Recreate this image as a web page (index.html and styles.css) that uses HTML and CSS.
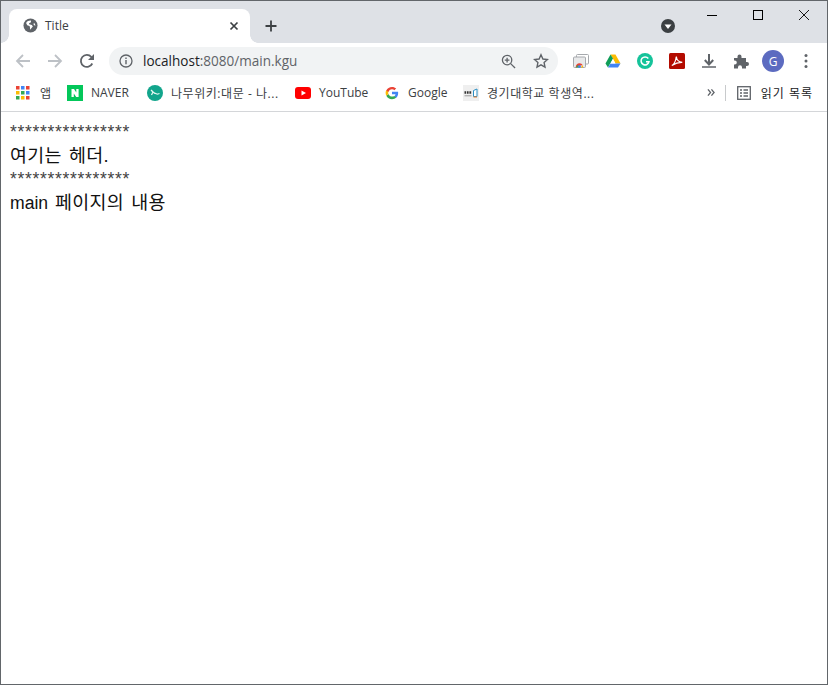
FILE: index.html
```html
<!DOCTYPE html>
<html lang="ko">
<head>
<meta charset="utf-8">
<title>Title</title>
<link rel="stylesheet" href="styles.css">
</head>
<body>
<div class="window">
  <header class="titlebar">
    <div class="tab">
      <svg class="globe" viewBox="0 0 16 16"><circle cx="8" cy="8" r="7.500" fill="#5f6368"/><path d="M8.500 2.800C6.500 2.600 4.500 3.500 3.300 5.300l1.200 2.500 2.500.7.500 1.800v2.200l1.200-1.200 1.800-2.300-1-1.500-3-.8V5.500l2-1zM12 5.200l-1 1.300 1 1.300 1.200.4c0-1-.5-2.100-1.200-3z" fill="#fff"/></svg>
      <span class="tab-title">Title</span>
      <svg class="tab-close" viewBox="0 0 10 10"><path d="M1.500 1.500l7 7M8.500 1.500l-7 7" stroke="#3c4043" stroke-width="1.700" fill="none"/></svg>
    </div>
    <svg class="newtab" viewBox="0 0 12 12"><path d="M6 .5v11M.5 6h11" stroke="#3c4043" stroke-width="1.800" fill="none"/></svg>
    <div class="title-spacer"></div>
    <svg class="search-tabs" viewBox="0 0 14 14"><circle cx="7" cy="7" r="7" fill="#3c4043"/><path d="M3.500 5.500h7L7 10z" fill="#fff"/></svg>
    <div class="winctl">
      <svg viewBox="0 0 10 10"><path d="M0 5.500h10" stroke="#000" fill="none"/></svg>
      <svg viewBox="0 0 10 10"><rect x=".5" y=".5" width="9" height="9" stroke="#000" fill="none"/></svg>
      <svg viewBox="0 0 10 10"><path d="M0 0l10 10M10 0L0 10" stroke="#000" stroke-width=".9" fill="none"/></svg>
    </div>
  </header>

  <div class="toolbar">
    <svg class="nav" viewBox="0 0 16 16"><path d="M15 8H2M8 2L2 8l6 6" stroke="#bdc1c6" stroke-width="1.800" fill="none"/></svg>
    <svg class="nav" viewBox="0 0 16 16"><path d="M1 8h13M8 2l6 6-6 6" stroke="#bdc1c6" stroke-width="1.800" fill="none"/></svg>
    <svg class="nav" viewBox="0 0 16 16"><path d="M13.300 10.500A6 6 0 1 1 12.300 3.800L14 5.500" stroke="#5f6368" stroke-width="1.800" fill="none"/><path d="M15 1v6H9z" fill="#5f6368"/></svg>
    <div class="omnibox">
      <svg class="info" viewBox="0 0 14 14"><circle cx="7" cy="7" r="6" stroke="#5f6368" stroke-width="1.300" fill="none"/><path d="M7 6v4.300M7 3.500v1.400" stroke="#5f6368" stroke-width="1.400" fill="none"/></svg>
      <span class="url">localhost<span class="url-rest">:8080/main.kgu</span></span>
      <svg class="zoom-ic" viewBox="0 0 16 16"><circle cx="6.500" cy="6.500" r="5" stroke="#5f6368" stroke-width="1.400" fill="none"/><path d="M10.300 10.300L15 15M6.500 4v5M4 6.500h5" stroke="#5f6368" stroke-width="1.400" fill="none"/></svg>
      <svg class="star" viewBox="0 0 16 16"><path d="M8 1.800l1.900 4.200 4.600.5-3.400 3.100.9 4.600L8 11.900l-4 2.300.9-4.600L1.500 6.500l4.600-.5z" stroke="#5f6368" stroke-width="1.400" fill="none"/></svg>
    </div>
    <div class="extensions">
      <svg class="ext" viewBox="0 0 16 16"><rect x="3.500" y="1.500" width="12" height="9.500" rx="1" fill="#fff" stroke="#a6a9ad"/><rect x=".5" y="4" width="12" height="10.500" rx="1" fill="#e8e9ea" stroke="#a6a9ad"/><path d="M2.800 14.500a3.700 3.700 0 0 1 3.700-4.200c1.500 0 2.600.7 3.300 2l-2 .3z" fill="#ea4335"/><path d="M9.800 12.300c.3.700.4 1.400.2 2.200H7.500z" fill="#fbbc04"/><path d="M2.800 14.500h4l-2-2.500z" fill="#34a853"/><circle cx="6.500" cy="13.600" r="1.400" fill="#4285f4"/></svg>
      <svg class="ext" viewBox="0 0 16 16"><path d="M5.500 1.500h5l5 9h-5z" fill="#fbbc04"/><path d="M5.500 1.500L.5 10.500 3 14.500l5-9z" fill="#0f9d58"/><path d="M3 14.500h10l2.500-4H5.500z" fill="#4285f4"/><path d="M8 6l2.400 4.500H5.600z" fill="#fff"/></svg>
      <svg class="ext" viewBox="0 0 16 16"><circle cx="8" cy="8" r="8" fill="#15c39a"/><path d="M11.300 5.500A4 4 0 1 0 12 8.700H9" stroke="#fff" stroke-width="1.500" fill="none"/></svg>
      <svg class="ext" viewBox="0 0 16 16"><rect width="16" height="16" rx="1.500" fill="#b30b00"/><path d="M2.800 12.500c2-1 4-5 4.500-9 .3 3 2.500 5.500 6 5.800-3.500-.2-7 1-10.500 3.200z" stroke="#fff" stroke-width="1.200" fill="none"/></svg>
      <svg class="ext" viewBox="0 0 16 16"><path d="M8 1v10M3.800 7L8 11.500 12.200 7" stroke="#5f6368" stroke-width="2" fill="none"/><path d="M1 14h14" stroke="#5f6368" stroke-width="1.500"/></svg>
      <svg class="ext" viewBox="0 0 16 16"><path d="M1 5h3.500V3.500a2 2 0 0 1 4 0V5H13v4h1a2 2 0 0 1 0 4h-1v2.500H9v-1.200a2 2 0 0 0-4 0v1.200H1v-4h.8a2 2 0 0 0 0-4H1z" fill="#5f6368"/></svg>
      <div class="avatar">G</div>
      <svg class="menu" viewBox="0 0 4 16"><circle cx="2" cy="2.500" r="1.500" fill="#5f6368"/><circle cx="2" cy="8" r="1.500" fill="#5f6368"/><circle cx="2" cy="13.500" r="1.500" fill="#5f6368"/></svg>
    </div>
  </div>

  <nav class="bookmarks">
    <a class="bm bm-apps">
      <svg class="bi" viewBox="0 0 14 14"><g><rect width="3.500" height="3.500" fill="#ea4335"/><rect x="5" width="3.500" height="3.500" fill="#4285f4"/><rect x="10" width="3.500" height="3.500" fill="#ea4335"/><rect y="5" width="3.500" height="3.500" fill="#fbbc04"/><rect x="5" y="5" width="3.500" height="3.500" fill="#34a853"/><rect x="10" y="5" width="3.500" height="3.500" fill="#4285f4"/><rect y="10" width="3.500" height="3.500" fill="#34a853"/><rect x="5" y="10" width="3.500" height="3.500" fill="#fbbc04"/><rect x="10" y="10" width="3.500" height="3.500" fill="#ea4335"/></g></svg>
      <span class="ko">앱</span>
    </a>
    <a class="bm bm-naver">
      <svg class="bi" viewBox="0 0 16 16"><rect width="16" height="16" fill="#03c75a"/><path d="M4.500 4h2.500l2.300 3.500V4h2.300v8H9.200L6.800 8.500V12H4.500z" fill="#fff"/></svg>
      <span>NAVER</span>
    </a>
    <a class="bm bm-namu">
      <svg class="bi" viewBox="0 0 16 16"><circle cx="8" cy="8" r="8" fill="#12a58c"/><path d="M4 5l2 2-1.500 3M6 7l2 1.500M8 8.500c1-.5 1.500 1 3 .5l1.500-.5" stroke="#e6f7f2" stroke-width="1.300" fill="none"/></svg>
      <span class="ko">나무위키:대문 - 나...</span>
    </a>
    <a class="bm bm-yt">
      <svg class="bi" viewBox="0 0 16 16"><rect y="2" width="16" height="12" rx="3" fill="#f00"/><path d="M6.500 5.500L11 8l-4.500 2.500z" fill="#fff"/></svg>
      <span>YouTube</span>
    </a>
    <a class="bm bm-google">
      <svg class="bi bi-g" viewBox="0 0 16 16"><path d="M15 8.200c0-.6 0-1-.1-1.500H8v2.800h4c-.2 1-.7 1.700-1.500 2.200l2.300 1.800C14.200 12.200 15 10.400 15 8.200z" fill="#4285f4"/><path d="M8 15c2 0 3.600-.6 4.800-1.800l-2.300-1.800c-.6.400-1.500.7-2.500.7-1.900 0-3.500-1.300-4.100-3L1.500 11C2.700 13.400 5.100 15 8 15z" fill="#34a853"/><path d="M3.900 9.100a4.300 4.300 0 0 1 0-2.700L1.500 4.600a7 7 0 0 0 0 6.400z" fill="#fbbc04"/><path d="M8 3.700c1.100 0 2 .4 2.800 1.100l2-2.100C11.600 1.700 10 1 8 1 5.100 1 2.700 2.600 1.500 5l2.400 1.800c.6-1.800 2.200-3.100 4.100-3.100z" fill="#ea4335"/></svg>
      <span>Google</span>
    </a>
    <a class="bm bm-kgu">
      <svg class="bi" viewBox="0 0 16 16"><rect width="16" height="16" fill="#efefef"/><path d="M1.500 7.500h1.500M3.800 7.500h1.800M6.400 7.500h1.800" stroke="#333" stroke-width="2.400"/><path d="M1.500 10.800h7" stroke="#9a9a9a"/><path d="M10.500 11.500V5.500l3.500-1.500v7.500z" fill="#fff" stroke="#2a8fc4"/><path d="M10.500 12h3.500" stroke="#e57b2f"/></svg>
      <span class="ko">경기대학교 학생역...</span>
    </a>
    <div class="bm-spacer"></div>
    <svg class="more" viewBox="0 0 9 8"><path d="M1 .5L4 4 1 7.500M5 .5L8 4 5 7.500" stroke="#5f6368" stroke-width="1.500" fill="none"/></svg>
    <div class="bm-sep"></div>
    <a class="bm bm-read">
      <svg class="bi-read" viewBox="0 0 14 14"><rect x=".7" y=".7" width="12.600" height="12.600" stroke="#5f6368" stroke-width="1.300" fill="none"/><path d="M3 4h2M6.500 4H11M3 7h2M6.500 7H11M3 10h2M6.500 10H11" stroke="#5f6368" stroke-width="1.300"/></svg>
      <span class="ko ko-read">읽기 목록</span>
    </a>
  </nav>

  <main class="page">
    <div class="stars">****************</div>
    <div class="ko-line">여기는 헤더.</div>
    <div class="stars">****************</div>
    <div>main <span class="ko-line">페이지의 내용</span></div>
  </main>
</div>
</body>
</html>
```

FILE: styles.css
```css
* { box-sizing: border-box; }
html, body { margin: 0; padding: 0; background: #fff; }
.window {
  width: 828px;
  height: 685px;
  border: 1px solid #62666a;
  display: flex;
  flex-direction: column;
  overflow: hidden;
  font-family: "Open Sans", "Noto Sans CJK KR", sans-serif;
}
.titlebar {
  height: 42px;
  flex: none;
  background: #dee1e6;
  display: flex;
  align-items: flex-start;
  padding-left: 8px;
}
.tab {
  position: relative;
  width: 241px;
  height: 34px;
  margin-top: 8px;
  background: #fff;
  border-radius: 8px 8px 0 0;
  display: flex;
  align-items: center;
  padding: 0 11px 1px 14px;
}
.tab::before,
.tab::after {
  content: "";
  position: absolute;
  bottom: 0;
  width: 8px;
  height: 8px;
}
.tab::before {
  left: -8px;
  background: radial-gradient(circle at 0 0, #dee1e6 7.5px, #fff 8px);
}
.tab::after {
  right: -8px;
  background: radial-gradient(circle at 100% 0, #dee1e6 7.5px, #fff 8px);
}
.globe { width: 15px; height: 15px; flex: none; }
.tab-title { font-size: 12px; color: #3c4043; margin-left: 7px; flex: 1; }
.tab-close { width: 10px; height: 10px; flex: none; }
.newtab { width: 12px; height: 12px; margin: 19px 0 0 15px; flex: none; }
.title-spacer { flex: 1; }
.search-tabs { width: 14px; height: 14px; margin: 18px 32px 0 0; flex: none; }
.winctl { display: flex; gap: 36px; padding: 9px 18px 0 0; }
.winctl svg { width: 10px; height: 10px; }
.toolbar {
  height: 34px;
  flex: none;
  display: flex;
  align-items: center;
  padding: 2px 0 0 14px;
  background: #fff;
}
.nav { width: 16px; height: 16px; flex: none; margin-right: 16px; }
.omnibox {
  width: 449px;
  height: 28px;
  margin-left: -2px;
  background: #f1f3f4;
  border-radius: 14px;
  display: flex;
  align-items: center;
  padding: 0 9px 0 10px;
  flex: none;
}
.info { width: 14px; height: 14px; flex: none; }
.url { font-size: 13.55px; color: #202124; margin-left: 10px; flex: 1; }
.url-rest { color: #5f6368; }
.zoom-ic { width: 15px; height: 15px; margin-right: 17px; flex: none; }
.star { width: 16px; height: 16px; flex: none; }
.extensions { display: flex; align-items: center; margin-left: 15px; }
.ext { width: 16px; height: 16px; margin-right: 16px; flex: none; }
.avatar {
  width: 22px;
  height: 22px;
  margin-left: -3px;
  border-radius: 50%;
  background: #5c6bc0;
  color: #fff;
  font-size: 12px;
  display: flex;
  align-items: center;
  justify-content: center;
  flex: none;
}
.menu { width: 4px; height: 16px; margin-left: 20px; flex: none; }
.bookmarks {
  height: 35px;
  flex: none;
  border-bottom: 1px solid #d4d6d9;
  display: flex;
  align-items: center;
  padding: 0 14px 3px 15px;
  font-size: 12px;
  color: #3c4043;
}
.bm { display: flex; align-items: center; flex: none; white-space: nowrap; }
.ko { letter-spacing: .55px; }
.ko-read { letter-spacing: 1px; }
.bi { width: 16px; height: 16px; flex: none; margin-right: 8px; }
.bi-g { width: 14px; height: 14px; margin: 0 9px 0 1px; }
.bm-apps { width: 51px; }
.bm-apps .bi { width: 14px; height: 14px; margin-right: 10px; }
.bm-naver { width: 80px; }
.bm-namu { width: 148px; }
.bm-yt { width: 89px; }
.bm-google { width: 79px; }
.bm-kgu { width: 140px; }
.bm-spacer { flex: 1; }
.more { width: 8px; height: 7px; flex: none; }
.bm-sep { width: 1px; height: 16px; background: #c8cacc; margin: 0 11px 0 10px; flex: none; }
.bi-read { width: 14px; height: 14px; margin-right: 10px; flex: none; }
.bm-read { color: #202124; }
.page {
  flex: 1;
  padding: 9px 9px 0;
  font-family: "Liberation Sans", "Noto Sans CJK KR", sans-serif;
  font-size: 17.6px;
  line-height: 23.4px;
  word-spacing: 2px;
  color: #111;
}
.stars { letter-spacing: .65px; color: #444; }
.ko-line { font-size: 18.4px; letter-spacing: .3px; }
```
